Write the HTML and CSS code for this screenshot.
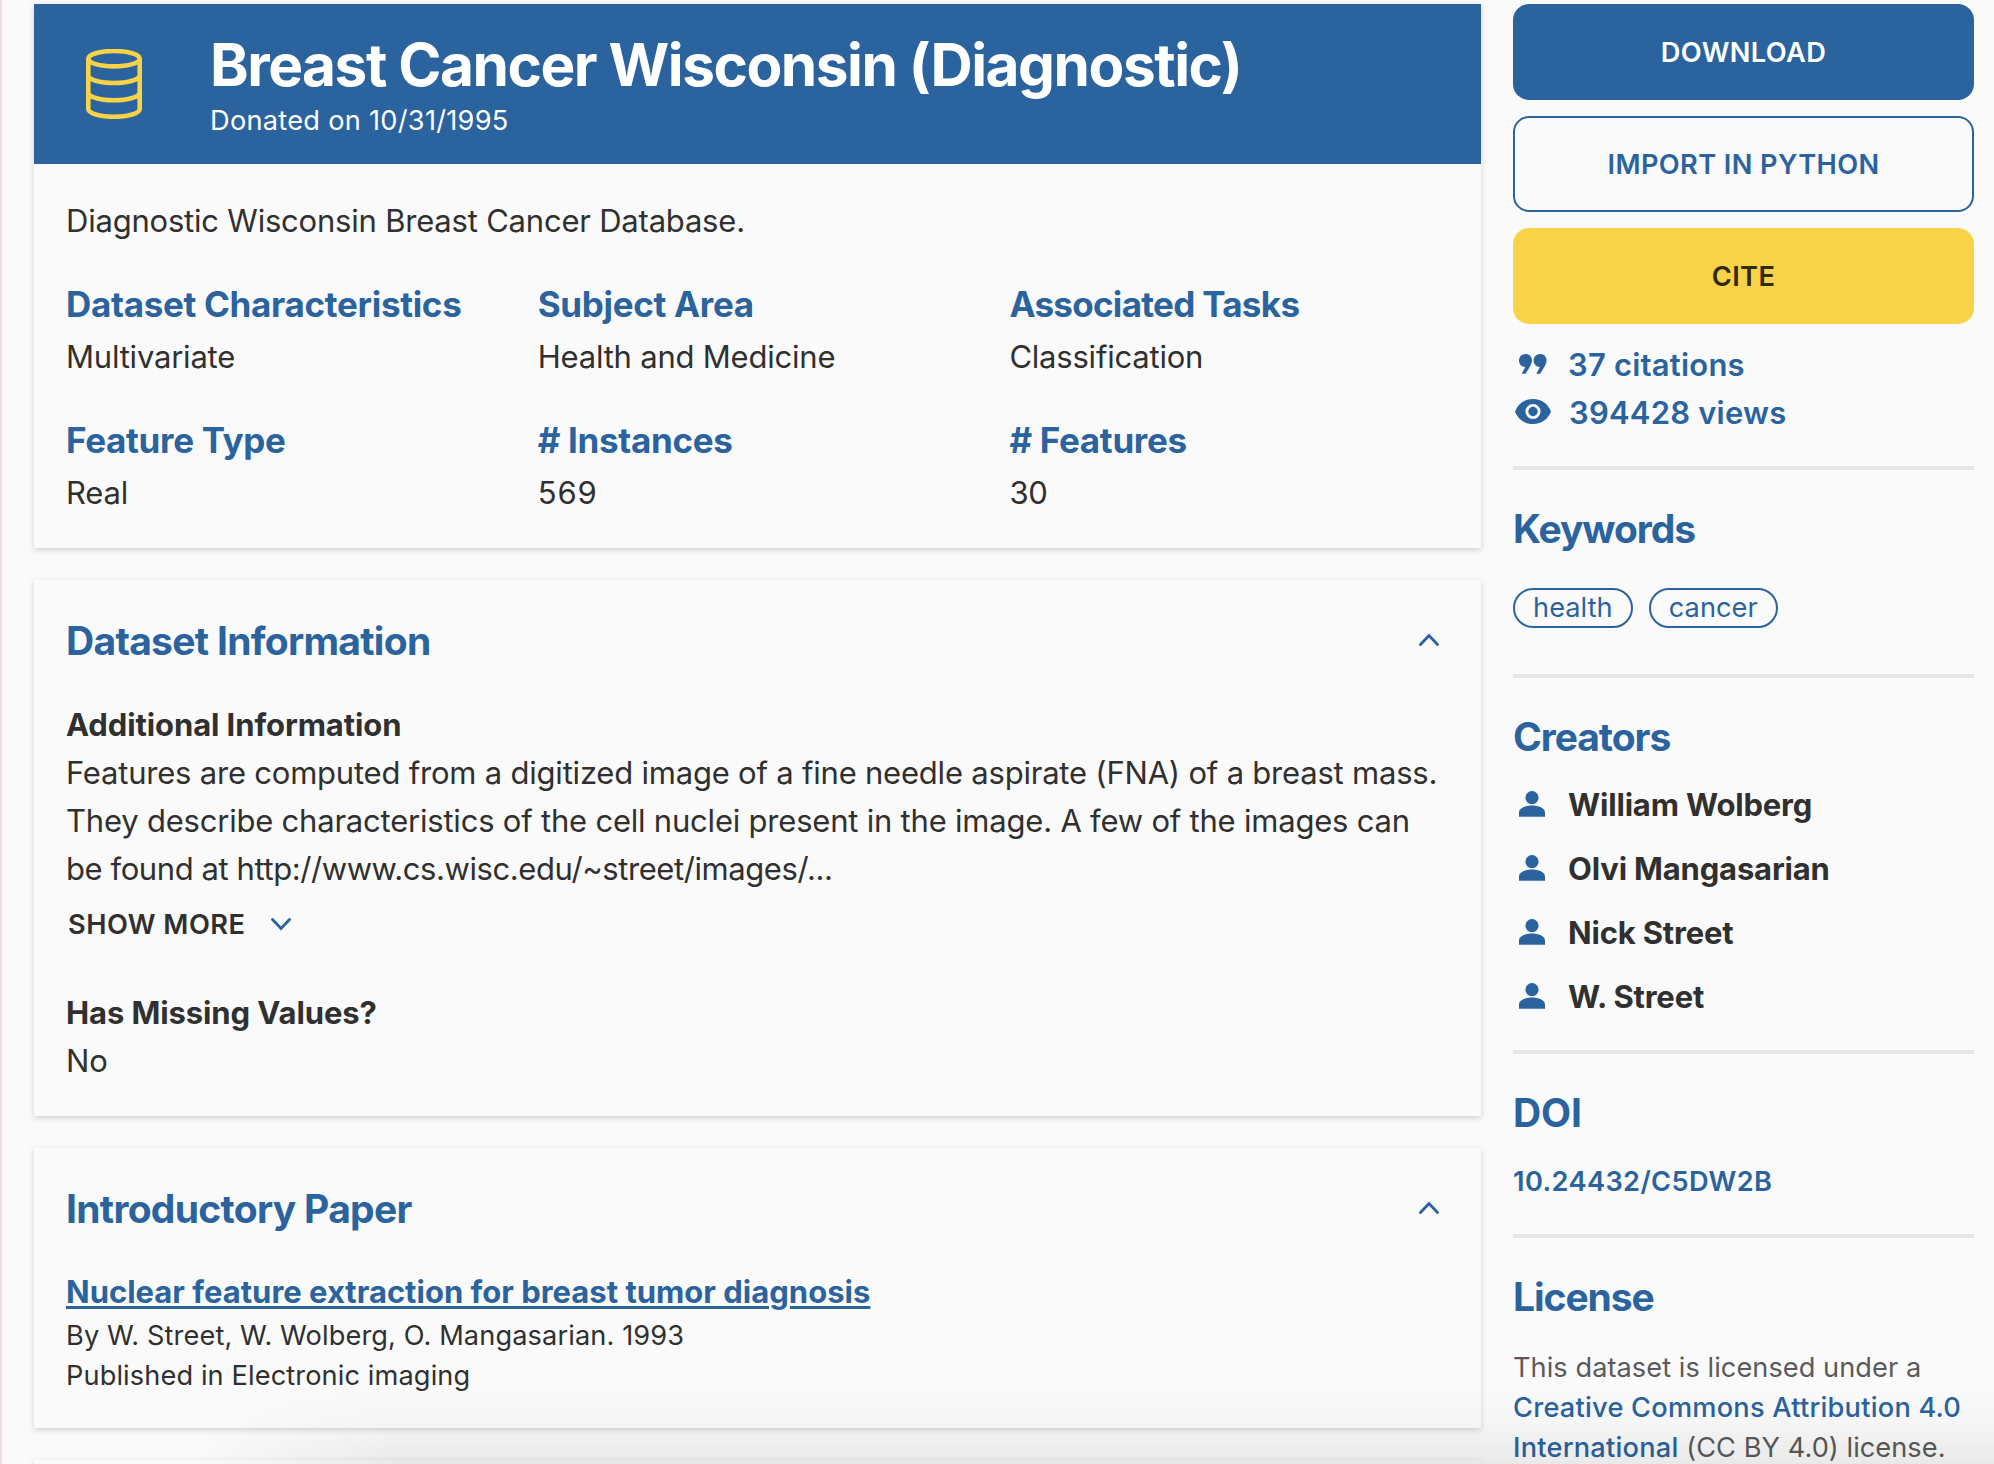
FILE: index.html
```html
<!DOCTYPE html>
<html lang="en">
<head>
<meta charset="utf-8">
<title>Breast Cancer Wisconsin (Diagnostic)</title>
<link rel="stylesheet" href="styles.css">
</head>
<body>
<svg class="sprite" aria-hidden="true">
  <symbol id="user" viewBox="0 0 26 26"><circle cx="13" cy="6.700" r="6.600"/><path d="M0 25.700v-4.400c0-4.200 7-6.800 13-6.800s13 2.600 13 6.800v4.400z"/></symbol>
</svg>
<div class="page">
  <main class="main">
    <section class="card">
      <header class="hero">
        <svg class="db" viewBox="0 0 56 70"><ellipse cx="28" cy="9.700" rx="25.700" ry="7.700"/><path d="M2.300 9.700V60c0 4.300 11.500 7.800 25.700 7.800S53.700 64.300 53.700 60V9.700M2.300 26.200c0 4.300 11.500 7.800 25.700 7.800s25.700-3.500 25.700-7.800M2.300 43.500c0 4.300 11.500 7.800 25.700 7.800s25.700-3.500 25.700-7.800"/></svg>
        <div>
          <h1 class="title">Breast Cancer Wisconsin (Diagnostic)</h1>
          <p class="donated">Donated on 10/31/1995</p>
        </div>
      </header>
      <div class="summary">
        <p class="text">Diagnostic Wisconsin Breast Cancer Database.</p>
        <div class="facts">
          <div><h2 class="fact">Dataset Characteristics</h2><p class="text">Multivariate</p></div>
          <div><h2 class="fact">Subject Area</h2><p class="text">Health and Medicine</p></div>
          <div><h2 class="fact tight">Associated Tasks</h2><p class="text">Classification</p></div>
          <div><h2 class="fact">Feature Type</h2><p class="text">Real</p></div>
          <div><h2 class="fact"># Instances</h2><p class="text number">569</p></div>
          <div><h2 class="fact"># Features</h2><p class="text">30</p></div>
        </div>
      </div>
    </section>
    <section class="card info">
      <div class="card-head"><h2 class="heading">Dataset Information</h2><svg class="chev" viewBox="0 0 20 14"><path d="M1.500 11.500 10 2.500l8.500 9"/></svg></div>
      <h3 class="label">Additional Information</h3>
      <p class="text">Features are computed from a digitized image of a fine needle aspirate (FNA) of a breast mass.<br>They describe characteristics of the cell nuclei present in the image. A few of the images can<br><span class="url">be found at http://www.cs.wisc.edu/~street/images/...</span></p>
      <div class="more"><span>SHOW MORE</span><svg class="chev" viewBox="0 0 20 14"><path d="M1.500 2.500 10 11.500l8.500-9"/></svg></div>
      <h3 class="label">Has Missing Values?</h3>
      <p class="text">No</p>
    </section>
    <section class="card paper">
      <div class="card-head"><h2 class="heading">Introductory Paper</h2><svg class="chev" viewBox="0 0 20 14"><path d="M1.500 11.500 10 2.500l8.500 9"/></svg></div>
      <a class="paper-link">Nuclear feature extraction for breast tumor diagnosis</a>
      <p class="small">By W. Street, W. Wolberg, O. Mangasarian. 1993</p>
      <p class="small">Published in Electronic imaging</p>
    </section>
    <section class="card next"></section>
  </main>
  <aside class="side">
    <button class="btn primary">DOWNLOAD</button>
    <button class="btn outline">IMPORT IN PYTHON</button>
    <button class="btn cite">CITE</button>
    <div class="stat"><svg class="quote" viewBox="0 0 28 20"><path id="q" d="M6.600 0C10.300 0 13 2.600 13 6.600 13 10 9.600 15 6.700 19.700H2.700L6.300 13.100C2.700 13.100 0 10.200 0 6.600 0 2.800 2.900 0 6.600 0z"/><use href="#q" x="14.600"/></svg><span>37 citations</span></div>
    <div class="stat views"><svg class="eye" viewBox="0 0 36 25"><path fill-rule="evenodd" d="M18 0C27 0 33 5 36 12.500 33 20 27 25 18 25S3 20 0 12.500C3 5 9 0 18 0zm0 4.900a7.600 7.600 0 1 0 0 15.200 7.600 7.600 0 0 0 0-15.200z"/><circle cx="18" cy="12.500" r="4.700"/></svg><span>394428 views</span></div>
    <hr>
    <h2 class="heading side-heading">Keywords</h2>
    <div class="chips"><span class="chip">health</span><span class="chip">cancer</span></div>
    <hr>
    <h2 class="heading side-heading">Creators</h2>
    <ul class="people">
      <li><svg class="user"><use href="#user"/></svg><span>William Wolberg</span></li>
      <li><svg class="user"><use href="#user"/></svg><span>Olvi Mangasarian</span></li>
      <li><svg class="user"><use href="#user"/></svg><span>Nick Street</span></li>
      <li><svg class="user"><use href="#user"/></svg><span>W. Street</span></li>
    </ul>
    <hr>
    <h2 class="heading caps">DOI</h2>
    <a class="doi">10.24432/C5DW2B</a>
    <hr>
    <h2 class="heading side-heading">License</h2>
    <p class="license">This dataset is licensed under a<br><a>Creative Commons Attribution 4.0<br>International</a> <span>(CC BY 4.0) license.</span></p>
  </aside>
</div>
<div class="shade"></div>
</body>
</html>
```
FILE: styles.css
```css
* { box-sizing: border-box; margin: 0; padding: 0; }
html { height: 1464px; overflow: hidden; }
body { position: relative; height: 1464px; overflow: hidden; background: #fafafa; color: #303030; font-family: Inter, "Liberation Sans", sans-serif; border-left: 2px solid #ecdcdc; }
.sprite { position: absolute; width: 0; height: 0; }
.page { display: grid; grid-template-columns: 1447px 461px; column-gap: 32px; padding: 4px 0 0 32px; }
.main { display: flex; flex-direction: column; gap: 32px; }
.card { background: #fafafa; box-shadow: 0 2px 6px rgba(0,0,0,.17); }

.hero { display: flex; height: 160px; background: #2b639e; color: #fff; padding: 25px 52px 0; gap: 68px; }
.db { width: 56px; height: 70px; margin-top: 20px; fill: none; stroke: #f8d348; stroke-width: 4.6; }
.title { margin: 0 0 4px; font-size: 58.5px; line-height: 71px; font-weight: 700; letter-spacing: -1.47px; white-space: nowrap; }
.donated { font-size: 27.2px; line-height: 33px; letter-spacing: .27px; }

.summary { height: 384px; padding: 32px 32px 0; }
.text { font-size: 31px; line-height: 48px; letter-spacing: -.21px; white-space: nowrap; }
.url { letter-spacing: -.418px; }
.summary .text { line-height: 50px; }
.facts { display: grid; grid-template-columns: repeat(3, 471.7px); row-gap: 30px; margin-top: 30px; }
.fact { font-size: 35px; line-height: 56px; font-weight: 700; letter-spacing: -.31px; color: #2b639e; }
.fact.tight { letter-spacing: -.7px; }
.text.number { letter-spacing: .9px; }

.heading { font-size: 39px; line-height: 57px; font-weight: 700; letter-spacing: -.7px; color: #2b639e; }
.side-heading { letter-spacing: -1.05px; }
.heading.caps { letter-spacing: -.1px; }
.card-head { display: flex; justify-content: space-between; align-items: center; padding-right: 10px; margin-bottom: 32px; }
.chev { width: 20px; height: 14px; fill: none; stroke: #2b639e; stroke-width: 2.9; stroke-linecap: round; }
.card-head .chev { margin-bottom: 2px; }

.info { height: 536px; padding: 32px 32px 0; }
.label { font-size: 31px; line-height: 48px; font-weight: 700; letter-spacing: -.1px; }
.more { display: flex; align-items: center; gap: 26px; height: 62px; margin-bottom: 34px; padding-left: 2px; font-size: 27.2px; font-weight: 600; letter-spacing: .475px; }

.paper { height: 280px; padding: 32px 32px 0; }
.paper .card-head { margin-bottom: 31px; }
.paper-link { display: block; font-size: 31px; line-height: 48px; font-weight: 700; color: #2b639e; text-decoration: underline 3px; text-underline-offset: 3px; white-space: nowrap; }
.small { font-size: 27.2px; line-height: 40px; letter-spacing: .11px; }
.next { height: 40px; }

.btn { display: block; width: 461px; height: 96px; margin-bottom: 16px; border: 0; border-radius: 16px; font: 600 27.2px Inter, sans-serif; letter-spacing: .4px; }
.primary { background: #2b639e; color: #fff; }
.outline { background: transparent; border: 2px solid #2b639e; color: #2b639e; }
.cite { background: #f8d348; color: #322a0e; }
.stat { display: flex; align-items: center; height: 48px; font-size: 31px; font-weight: 600; letter-spacing: .2px; color: #2b639e; fill: #2b639e; }
.views { margin-bottom: 30px; }
.quote { width: 28px; height: 20px; margin: 0 21px 0 6px; }
.eye { width: 36px; height: 25px; margin: 0 18px 2px 2px; }
hr { height: 4px; margin-bottom: 30px; border: 0; background: #e6e6e6; }
.chips { display: flex; gap: 16px; margin: 31px 0 46px; }
.chip { height: 40px; border: 2px solid #2b639e; border-radius: 20px; padding: 0 18px; font-size: 27.2px; line-height: 36px; letter-spacing: .05px; color: #2b639e; }
.people { list-style: none; margin: 7px 0 22px; font-size: 31px; font-weight: 700; letter-spacing: -.18px; }
.people li { display: flex; align-items: center; height: 64px; }
.user { width: 26px; height: 26px; margin: 0 23px 0 6px; fill: #2b639e; }
.doi { display: block; margin: 21px 0 32px; font-size: 27.2px; line-height: 40px; font-weight: 600; letter-spacing: .385px; color: #2b639e; }
.license { margin-top: 23px; font-size: 27.2px; line-height: 40px; letter-spacing: .05px; color: #5a5a5a; white-space: nowrap; }
.license a { color: #2b639e; font-weight: 500; letter-spacing: .23px; }

/* soft shadow cast over the bottom edge of the viewport */
.shade { position: absolute; left: 190px; right: 0; bottom: 0; height: 80px; background: linear-gradient(rgba(0,0,0,0), rgba(0,0,0,.015) 45%, rgba(0,0,0,.065)); -webkit-mask-image: linear-gradient(90deg, transparent, #000 200px); mask-image: linear-gradient(90deg, transparent, #000 200px); }
```
